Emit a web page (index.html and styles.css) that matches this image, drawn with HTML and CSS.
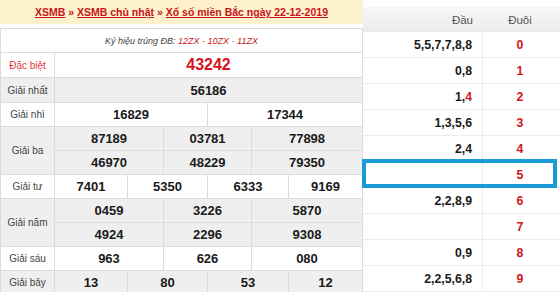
FILE: index.html
```html
<!DOCTYPE html>
<html lang="vi">
<head>
<meta charset="utf-8">
<title>XSMB 22-12-2019</title>
<link rel="stylesheet" href="styles.css">
</head>
<body>
<div class="page">
  <section class="left">
    <div class="crumbs"><a href="#">XSMB</a> » <a href="#">XSMB chủ nhật</a> » <a href="#">Xổ số miền Bắc ngày 22-12-2019</a></div>
    <div class="results">
      <div class="row ky">Ký hiệu trúng ĐB: <span class="codes">12ZX - 10ZX - 11ZX</span></div>
      <div class="row tall">
        <div class="label red">Đặc biệt</div>
        <div class="vals c1"><span class="db">43242</span></div>
      </div>
      <div class="row tall grey">
        <div class="label">Giải nhất</div>
        <div class="vals c1"><span>56186</span></div>
      </div>
      <div class="row">
        <div class="label">Giải nhì</div>
        <div class="vals c2"><span>16829</span><span>17344</span></div>
      </div>
      <div class="row grey">
        <div class="label">Giải ba</div>
        <div class="multi">
          <div class="vals c3"><span>87189</span><span>03781</span><span>77898</span></div>
          <div class="vals c3"><span>46970</span><span>48229</span><span>79350</span></div>
        </div>
      </div>
      <div class="row">
        <div class="label">Giải tư</div>
        <div class="vals c4"><span>7401</span><span>5350</span><span>6333</span><span>9169</span></div>
      </div>
      <div class="row grey">
        <div class="label">Giải năm</div>
        <div class="multi">
          <div class="vals c3"><span>0459</span><span>3226</span><span>5870</span></div>
          <div class="vals c3"><span>4924</span><span>2296</span><span>9308</span></div>
        </div>
      </div>
      <div class="row">
        <div class="label">Giải sáu</div>
        <div class="vals c3"><span>963</span><span>626</span><span>080</span></div>
      </div>
      <div class="row grey">
        <div class="label">Giải bảy</div>
        <div class="vals c4"><span>13</span><span>80</span><span>53</span><span>12</span></div>
      </div>
    </div>
  </section>
  <section class="right">
    <div class="lt head"><div class="dau">Đầu</div><div class="duoi">Đuôi</div></div>
    <div class="lt"><div class="dau">5,5,7,7,8,8</div><div class="duoi">0</div></div>
    <div class="lt"><div class="dau">0,8</div><div class="duoi">1</div></div>
    <div class="lt"><div class="dau">1,<span class="hl">4</span></div><div class="duoi">2</div></div>
    <div class="lt"><div class="dau">1,3,5,6</div><div class="duoi">3</div></div>
    <div class="lt"><div class="dau">2,4</div><div class="duoi">4</div></div>
    <div class="lt marked"><div class="dau"></div><div class="duoi">5</div></div>
    <div class="lt"><div class="dau">2,2,8,9</div><div class="duoi">6</div></div>
    <div class="lt"><div class="dau"></div><div class="duoi">7</div></div>
    <div class="lt"><div class="dau">0,9</div><div class="duoi">8</div></div>
    <div class="lt"><div class="dau">2,2,5,6,8</div><div class="duoi">9</div></div>
  </section>
</div>
</body>
</html>
```

FILE: styles.css
```css
* { box-sizing: border-box; }
html, body { margin: 0; padding: 0; background: #fff; }
body { font-family: "Liberation Sans", Arial, sans-serif; color: #222; overflow: hidden; }

.page { display: flex; width: 560px; height: 292px; }

.left { width: 363px; flex: none; }
.crumbs {
  height: 24px;
  background: #fdf2cd;
  color: #c8141b;
  font-size: 10.5px;
  font-weight: bold;
  line-height: 25px;
  text-align: center;
  white-space: nowrap;
}
.crumbs a { color: #c8141b; text-decoration: underline; }

.results {
  margin-top: 4px;
  border: 1px solid #dcdcdc;
  border-bottom: none;
}
.row {
  display: flex;
  height: 24px;
  border-bottom: 1px solid #dcdcdc;
  background: #fff;
}
.row.tall { height: 25px; }
.row.grey { background: #efefef; }
.row:has(.multi) { height: 48px; }

.ky {
  justify-content: center;
  align-items: center;
  font-size: 9px;
  font-style: italic;
  color: #444;
  white-space: pre;
}
.ky .codes { color: #c8141b; }

.label {
  width: 54px;
  flex: none;
  border-right: 1px solid #dcdcdc;
  display: flex;
  align-items: center;
  justify-content: center;
  font-size: 10px;
  color: #444;
}
.label.red { color: #e0383e; }

.multi { flex: 1; display: flex; flex-direction: column; }
.multi .vals { flex: 1; }
.multi .vals + .vals { border-top: 1px solid #dcdcdc; }

.vals {
  flex: 1;
  display: grid;
  font-size: 13px;
  font-weight: bold;
  color: #1a1a1a;
}
.vals span {
  display: flex;
  align-items: center;
  justify-content: center;
  border-left: 1px solid #dcdcdc;
}
.vals span:first-child { border-left: none; }
.c1 { grid-template-columns: 1fr; }
.c2 { grid-template-columns: 152px 1fr; }
.c3 { grid-template-columns: 108px 88px 1fr; }
.c4 { grid-template-columns: 72px 80px 81px 1fr; }
.db { color: #d5141c; font-size: 16px; }

.right { flex: 1; padding-top: 7px; }
.lt {
  display: flex;
  height: 26px;
  border-bottom: 1px solid #ececec;
  font-size: 12.3px;
  font-weight: bold;
  position: relative;
}
.lt.head {
  height: 25px;
  background: linear-gradient(#f7f7f7, #ebebeb);
  font-weight: normal;
  font-size: 11.5px;
  color: #555;
  border-bottom: none;
}
.dau {
  width: 120px;
  flex: none;
  border-right: 1px solid #ececec;
  display: flex;
  align-items: center;
  justify-content: flex-end;
  padding-right: 10px;
  color: #1a1a1a;
}
.head .dau { color: #555; border-right: none; }
.duoi {
  width: 74px;
  display: flex;
  align-items: center;
  justify-content: center;
  color: #d0141c;
}
.head .duoi { color: #555; }
.hl { color: #d0141c; }

.marked::after {
  content: "";
  position: absolute;
  left: -1px;
  right: 3px;
  top: -3px;
  bottom: -1px;
  border: 4px solid #1a9ad7;
}
```
